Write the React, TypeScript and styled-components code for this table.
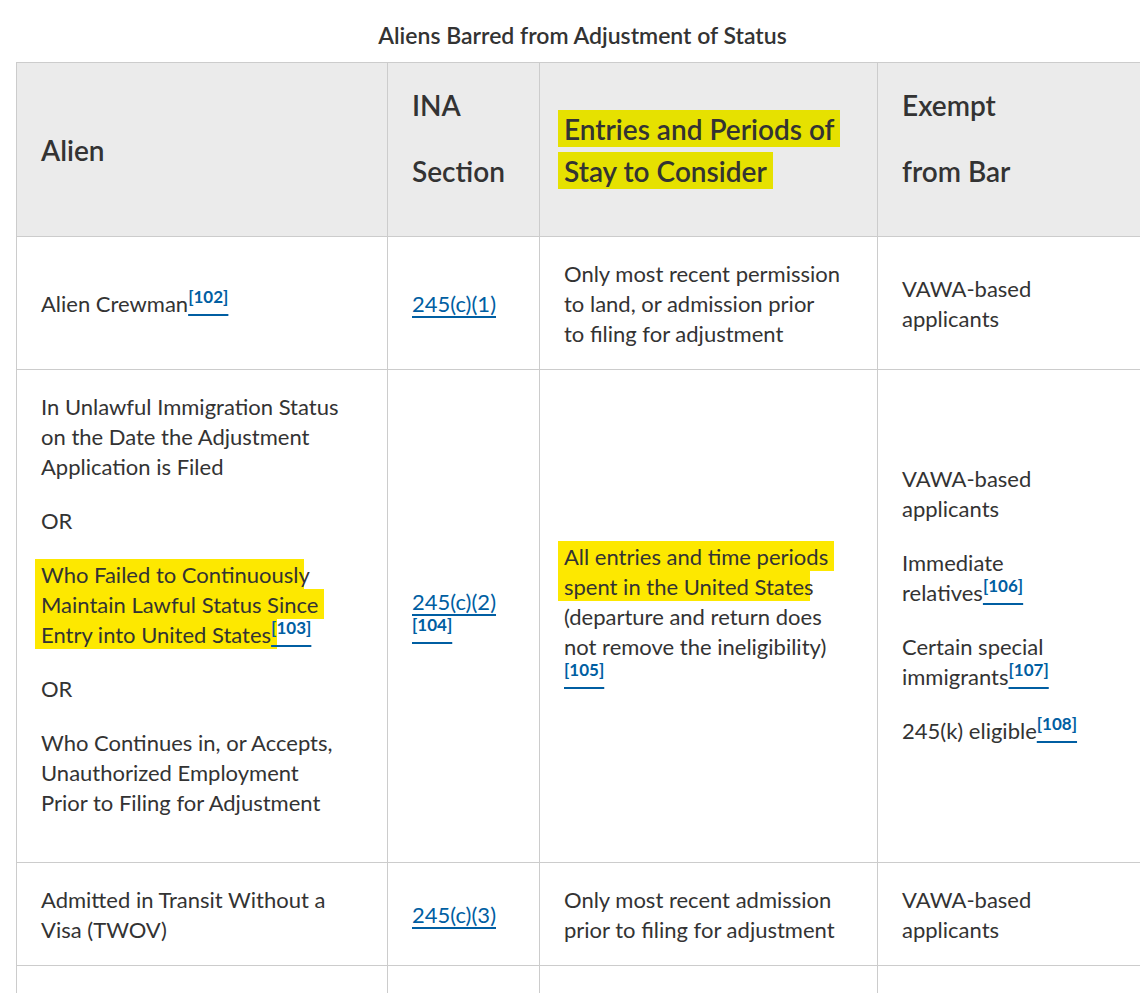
import React from 'react';
import styled, {createGlobalStyle} from 'styled-components';

const GlobalStyle = createGlobalStyle`
  html, body {
    margin: 0;
    padding: 0;
    background: #ffffff;
  }
  body {
    font-family: Lato, "Liberation Sans", sans-serif;
    color: #333333;
  }
`;

const Page = styled.div`
  width: 1140px;
  box-sizing: border-box;
  padding: 19px 0 0 16px;
  overflow: hidden;
`;

const Table = styled.table`
  width: 1132px;
  border-collapse: collapse;
  table-layout: fixed;
`;

const Caption = styled.caption`
  font-size: 23px;
  font-weight: 600;
  line-height: 33px;
  padding-bottom: 10px;
  color: #333333;
`;

const Col = styled.col<{$w: number}>`
  width: ${p => p.$w}px;
`;

const HeadCell = styled.th`
  background: #ebebeb;
  border: 1px solid #cccccc;
  padding: 21px 24px 20px;
  font-size: 28px;
  font-weight: 600;
  line-height: 42px;
  text-align: left;
  vertical-align: middle;
  white-space: nowrap;
`;

const Cell = styled.td`
  border: 1px solid #cccccc;
  padding: 22px 24px 20px;
  font-size: 22px;
  line-height: 30px;
  vertical-align: middle;
  white-space: nowrap;
`;

const Para = styled.p`
  margin: 0 0 24px;
`;

const LawLink = styled.a`
  color: #005ea2;
  text-decoration: underline;
  text-decoration-thickness: 2px;
  text-underline-offset: 4px;
`;

const Ref = styled.a`
  font-size: 17px;
  font-weight: 700;
  line-height: 0;
  color: #005ea2;
  vertical-align: 9px;
  text-decoration: underline;
  text-decoration-thickness: 2px;
  text-underline-offset: 11px;
`;

// marker strokes someone drew over the screenshot
const Hl = styled.span<{$onGray?: boolean}>`
  background: ${p => (p.$onGray ? '#e6e100' : '#fde800')};
  padding: 2px 6px 1px;
  margin: 0 -6px;
  box-decoration-break: clone;
  -webkit-box-decoration-break: clone;
`;

const App = () => {
  return (
    <Page>
      <GlobalStyle />
      <Table>
        <Caption>Aliens Barred from Adjustment of Status</Caption>
        <colgroup>
          <Col $w={371} />
          <Col $w={152} />
          <Col $w={338} />
          <Col $w={271} />
        </colgroup>
        <thead>
          <tr>
            <HeadCell>Alien</HeadCell>
            <HeadCell>
              <Para>INA</Para>
              <Para>Section</Para>
            </HeadCell>
            <HeadCell>
              <Hl $onGray>Entries and Periods of</Hl>
              <br />
              <Hl $onGray>Stay to Consider</Hl>
            </HeadCell>
            <HeadCell>
              <Para>Exempt</Para>
              <Para>from Bar</Para>
            </HeadCell>
          </tr>
        </thead>
        <tbody>
          <tr>
            <Cell>
              Alien Crewman<Ref href="#fn102">[102]</Ref>
            </Cell>
            <Cell>
              <LawLink href="#c1">245(c)(1)</LawLink>
            </Cell>
            <Cell>
              Only most recent permission
              <br />
              to land, or admission prior
              <br />
              to filing for adjustment
            </Cell>
            <Cell>
              VAWA-based
              <br />
              applicants
            </Cell>
          </tr>
          <tr>
            <Cell>
              <Para>
                In Unlawful Immigration Status
                <br />
                on the Date the Adjustment
                <br />
                Application is Filed
              </Para>
              <Para>OR</Para>
              <Para>
                <Hl>Who Failed to Continuousl</Hl>y
                <br />
                <Hl>Maintain Lawful Status Since</Hl>
                <br />
                <Hl>Entry into United States</Hl>
                <Ref href="#fn103">[103]</Ref>
              </Para>
              <Para>OR</Para>
              <Para>
                Who Continues in, or Accepts,
                <br />
                Unauthorized Employment
                <br />
                Prior to Filing for Adjustment
              </Para>
            </Cell>
            <Cell>
              <LawLink href="#c2">245(c)(2)</LawLink>
              <br />
              <Ref href="#fn104">[104]</Ref>
            </Cell>
            <Cell>
              <Hl>All entries and time periods</Hl>
              <br />
              <Hl>spent in the United State</Hl>s
              <br />
              (departure and return does
              <br />
              not remove the ineligibility)
              <br />
              <Ref href="#fn105">[105]</Ref>
            </Cell>
            <Cell>
              <Para>
                VAWA-based
                <br />
                applicants
              </Para>
              <Para>
                Immediate
                <br />
                relatives<Ref href="#fn106">[106]</Ref>
              </Para>
              <Para>
                Certain special
                <br />
                immigrants<Ref href="#fn107">[107]</Ref>
              </Para>
              <Para>
                245(k) eligible<Ref href="#fn108">[108]</Ref>
              </Para>
            </Cell>
          </tr>
          <tr>
            <Cell>
              Admitted in Transit Without a
              <br />
              Visa (TWOV)
            </Cell>
            <Cell>
              <LawLink href="#c3">245(c)(3)</LawLink>
            </Cell>
            <Cell>
              Only most recent admission
              <br />
              prior to filing for adjustment
            </Cell>
            <Cell>
              VAWA-based
              <br />
              applicants
            </Cell>
          </tr>
          <tr>
            <Cell>
              Admitted as Nonimmigrant Visitor
              <br />
              without a Visa under the Visa
              <br />
              Waiver Program
            </Cell>
            <Cell>
              <LawLink href="#c4">245(c)(4)</LawLink>
            </Cell>
            <Cell>
              Only most recent admission
              <br />
              prior to filing for adjustment
            </Cell>
            <Cell>
              Immediate relatives
              <br />
              VAWA-based applicants
            </Cell>
          </tr>
        </tbody>
      </Table>
    </Page>
  );
};

export default App;
